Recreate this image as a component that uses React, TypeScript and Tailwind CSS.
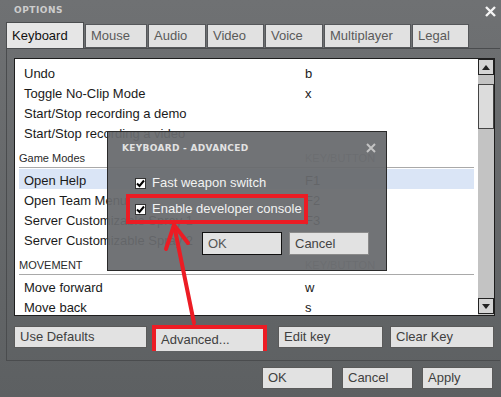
import React from 'react';

const font = { fontFamily: '"Liberation Sans", Arial, sans-serif' };

type Row = { label: string; k?: string; selected?: boolean };

const gameModes: Row[] = [
  { label: 'Open Help', k: 'F1', selected: true },
  { label: 'Open Team Menu', k: 'F2' },
  { label: 'Server Customizable Spray 1', k: 'F3' },
  { label: 'Server Customizable Spray 2' },
];

const ListRow = ({ label, k, selected }: Row) => (
  <div className={`grid h-[20px] grid-cols-[281px_1fr] items-center pl-[5px] pt-[2px] ${selected ? 'bg-[#dae5f6]' : ''}`}>
    <span className="whitespace-nowrap">{label}</span>
    <span>{k}</span>
  </div>
);

const Section = ({ title }: { title: string }) => (
  <div className="mb-[1px] grid h-[26px] grid-cols-[286px_1fr] items-end border-b border-[#a9a9a9] pb-[1px] text-[11px] text-[#2a2a2a]">
    <span>{title}</span>
    <span className="text-[#9a9a9a]">KEY/BUTTON</span>
  </div>
);

const Btn = ({ label, w, className = '' }: { label: string; w: string; className?: string }) => (
  <div className={`flex h-[22px] items-center border border-[#5a5a5a] bg-[#e2e2e2] pl-[5px] text-[13px] text-[#404040] ${w} ${className}`}>
    {label}
  </div>
);

const Check = () => (
  <div className="flex h-[11px] w-[11px] items-center justify-center border border-[#333] bg-white">
    <svg width="9" height="9" viewBox="0 0 9 9">
      <path d="M1 4.5 L3.5 7 L8 1.5" stroke="#000" strokeWidth="2" fill="none" />
    </svg>
  </div>
);

const Arrow = ({ up }: { up?: boolean }) => (
  <div className="flex h-[16px] w-[16px] items-center justify-center border border-[#222] bg-[#d4d4d4]">
    <svg width="8" height="5" viewBox="0 0 8 5">
      <path d={up ? 'M0 5 L4 0 L8 5 Z' : 'M0 0 L4 5 L8 0 Z'} fill="#222" />
    </svg>
  </div>
);

const tabs = [
  { label: 'Mouse', w: 'w-[62px]' },
  { label: 'Audio', w: 'w-[58px]' },
  { label: 'Video', w: 'w-[57px]' },
  { label: 'Voice', w: 'w-[58px]' },
  { label: 'Multiplayer', w: 'w-[87px]' },
  { label: 'Legal', w: 'w-[57px]' },
];

export default function App() {
  return (
    <div style={font} className="relative h-[397px] w-[501px] overflow-hidden bg-linear-to-b from-[#6f7173] to-[#5d6062]">
      {/* title bar */}
      <div className="flex h-[22px] items-start justify-between pl-[14px] pr-[5px] pt-[4px]">
        <span style={{ fontFamily: '"DejaVu Sans", sans-serif' }} className="text-[9px] font-bold tracking-[0.5px] text-[#cdcdcd]">
          OPTIONS
        </span>
        <svg width="11" height="11" viewBox="0 0 11 11" className="mt-[2px]">
          <path d="M1 1 L10 10 M10 1 L1 10" stroke="#f4f4f4" strokeWidth="2.4" />
        </svg>
      </div>

      {/* tabs */}
      <div className="flex h-[26px] items-end gap-[1px] pl-[6px]">
        <div className="flex h-[26px] w-[78px] items-center border border-b-0 border-[#4b4d4f] bg-[#e6e6e6] pl-[5px] text-[13px] text-[#111]">
          Keyboard
        </div>
        {tabs.map((t) => (
          <div key={t.label} className={`flex h-[24px] items-center border border-[#55575a] bg-[#e1e1e1] pl-[5px] text-[13px] text-[#5a5a5a] ${t.w}`}>
            {t.label}
          </div>
        ))}
      </div>

      {/* panel */}
      <div className="ml-[6px] h-[313px] w-[494px] border border-r-0 border-[#4a4c4e] pl-[7px] pt-[9px]">
        <div className="flex h-[258px] w-[481px] border border-[#1e1e1e] bg-white">
          <div className="h-full flex-1 overflow-hidden px-[4px] pt-[3px] text-[13px] text-[#1a1a1a]">
            <ListRow label="Undo" k="b" />
            <ListRow label="Toggle No-Clip Mode" k="x" />
            <ListRow label="Start/Stop recording a demo" />
            <ListRow label="Start/Stop recording a video" />
            <Section title="Game Modes" />
            {gameModes.map((r) => (
              <ListRow key={r.label} {...r} />
            ))}
            <Section title="MOVEMENT" />
            <ListRow label="Move forward" k="w" />
            <ListRow label="Move back" k="s" />
          </div>
          <div className="flex w-[16px] flex-col bg-[#c3c3c3]">
            <Arrow up />
            <div className="mt-[9px] h-[45px] w-[16px] border border-[#444] bg-[#dcdcdc]" />
            <div className="flex-1" />
            <div className="mb-[1px]">
              <Arrow />
            </div>
          </div>
        </div>

        <div className="mt-[9px] flex items-start">
          <Btn label="Use Defaults" w="w-[133px]" className="mt-[1px]" />
          <div className="ml-[5px] h-[26px] w-[115px] border-[4px] border-[#ec1c24] bg-[#ec1c24]">
            <Btn label="Advanced..." w="w-full" className="h-[18px] border-0" />
          </div>
          <Btn label="Edit key" w="w-[105px]" className="ml-[11px] mt-[1px]" />
          <Btn label="Clear Key" w="w-[104px]" className="ml-[7px] mt-[1px]" />
        </div>
      </div>

      {/* bottom buttons */}
      <div className="mt-[6px] flex justify-end gap-[9px] pr-[8px]">
        <Btn label="OK" w="w-[71px]" />
        <Btn label="Cancel" w="w-[71px]" />
        <Btn label="Apply" w="w-[71px]" />
      </div>

      {/* advanced dialog */}
      <div className="absolute left-[107px] top-[131px] flex h-[140px] w-[280px] flex-col border border-[#2a2a2a] bg-[#686a6d]/[0.94]">
        <div className="flex h-[30px] items-start justify-between pl-[14px] pr-[10px] pt-[10px]">
          <span style={{ fontFamily: '"DejaVu Sans", sans-serif' }} className="text-[9px] font-bold tracking-[0.3px] text-[#e2e2e2]">
            KEYBOARD - ADVANCED
          </span>
          <svg width="10" height="10" viewBox="0 0 10 10" className="mt-[1px]">
            <path d="M1 1 L9 9 M9 1 L1 9" stroke="#c4c4c4" strokeWidth="2" />
          </svg>
        </div>
        <div className="ml-[27px] mt-[11px] flex h-[20px] items-center gap-[6px] text-[13px] text-[#f2f2f2]">
          <Check />
          Fast weapon switch
        </div>
        <div className="ml-[18px] mt-[1px] flex h-[30px] w-[182px] items-center gap-[6px] border-[4px] border-[#ec1c24] pl-[5px] text-[13px] text-[#f2f2f2]">
          <Check />
          <span className="whitespace-nowrap">Enable developer console</span>
        </div>
        <div className="ml-[94px] mt-[8px] flex gap-[7px]">
          <div className="flex h-[23px] w-[80px] items-center border border-[#111] bg-[#e2e2e2] pl-[5px] text-[13px] text-[#555]">OK</div>
          <div className="flex h-[23px] w-[80px] items-center border border-[#8a8a8a] bg-[#e2e2e2] pl-[5px] text-[13px] text-[#444]">Cancel</div>
        </div>
      </div>

      {/* red annotation arrow */}
      <svg className="pointer-events-none absolute left-0 top-0" width="501" height="397" viewBox="0 0 501 397">
        <g stroke="#ec1c24" strokeWidth="4" strokeLinecap="round" fill="none">
          <path d="M174 225 L194 323" />
          <path d="M174 225 L166 249" />
          <path d="M174 225 L188 243" />
        </g>
      </svg>
    </div>
  );
}
